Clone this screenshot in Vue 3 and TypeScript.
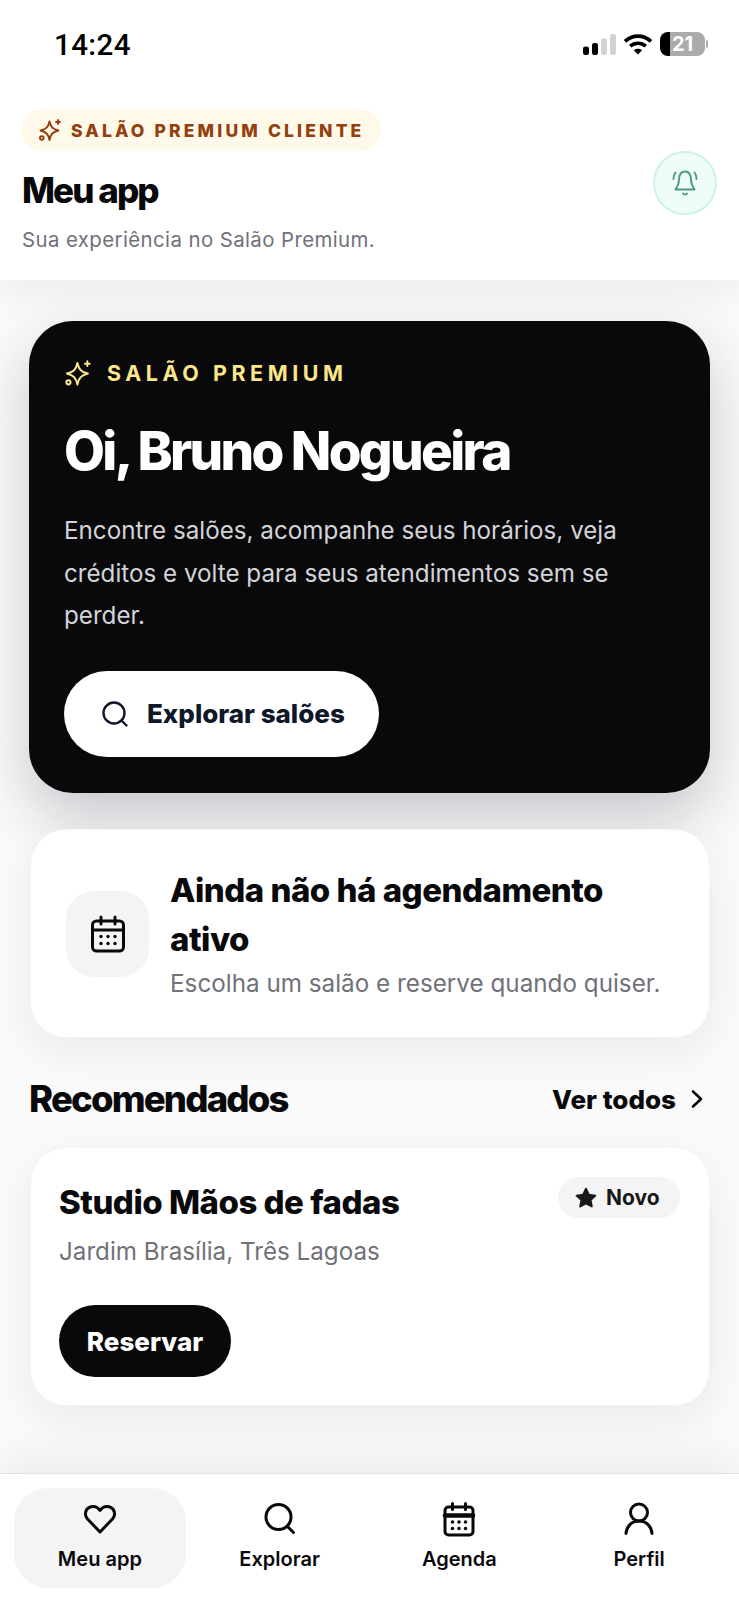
<script setup lang="ts">
const navItems = [
  { key: 'home', label: 'Meu app', active: true },
  { key: 'search', label: 'Explorar', active: false },
  { key: 'calendar', label: 'Agenda', active: false },
  { key: 'user', label: 'Perfil', active: false },
]
</script>

<template>
  <div class="app">
    <div class="status">
      <span class="time">14:24</span>
      <div class="status-icons">
        <svg class="signal" width="33" height="21" viewBox="0 0 33 21">
          <rect x="0" y="12.5" width="6" height="8.5" rx="2.2" fill="#000" />
          <rect x="9" y="9" width="6" height="12" rx="2.2" fill="#000" />
          <rect x="18" y="4.5" width="6" height="16.5" rx="2.2" fill="#d2d2d4" />
          <rect x="27" y="0" width="6" height="21" rx="2.2" fill="#d2d2d4" />
        </svg>
        <svg class="wifi" width="30" height="22" viewBox="0 0 30 22" fill="none" stroke="#000" stroke-width="3.6">
          <path d="M2 8.4C9.4 1.4 20.6 1.4 28 8.4" />
          <path d="M7.2 13.2C11.6 9.2 18.4 9.2 22.8 13.2" />
          <path d="M15 21.5 10.9 17.2C13.2 15.2 16.8 15.2 19.1 17.2Z" fill="#000" stroke="none" />
        </svg>
        <div class="battery"><span>21</span></div>
        <i class="battery-tip"></i>
      </div>
    </div>

    <header class="top">
      <div class="top-text">
        <div class="pill">
          <svg width="24" height="24" viewBox="0 0 24 24" fill="none" stroke="currentColor" stroke-width="1.9" stroke-linecap="round" stroke-linejoin="round">
            <path d="M11.5 3.5C12.8 9.2 14.8 11 20.5 12.5 14.8 14 12.8 15.8 11.5 22 10.2 15.800 8.200 14 2.500 12.500 8.200 11 10.200 9.200 11.500 3.500Z" />
            <path d="M20 2v4M18 4h4" />
            <circle cx="3.800" cy="20" r="1.800" />
          </svg>
          <span>SALÃO PREMIUM CLIENTE</span>
        </div>
        <h1>Meu app</h1>
        <p>Sua experiência no Salão Premium.</p>
      </div>
      <div class="bell">
        <svg width="30" height="30" viewBox="0 0 30 30" fill="none" stroke="currentColor" stroke-width="2" stroke-linecap="round" stroke-linejoin="round">
          <path d="M9 12C9 6 11.500 3.500 15 3.500S21 6 21 12C21 16.500 23 19 24.500 21.500H5.500C7 19 9 16.500 9 12Z" />
          <path d="M13 25.500C14 26.800 16 26.800 17 25.500" />
          <path d="M3.500 11C3.500 8.500 4 6.500 5.500 4.500M26.500 11C26.500 8.500 26 6.500 24.500 4.500" />
        </svg>
      </div>
    </header>

    <main class="content">
      <section class="hero">
        <div class="eyebrow">
          <svg width="28" height="28" viewBox="0 0 24 24" fill="none" stroke="currentColor" stroke-width="1.700" stroke-linecap="round" stroke-linejoin="round">
            <path d="M11.500 3.500C12.800 9.200 14.800 11 20.500 12.500 14.800 14 12.800 15.800 11.500 22 10.200 15.800 8.200 14 2.500 12.500 8.200 11 10.200 9.200 11.500 3.500Z" />
            <path d="M20 2v4M18 4h4" />
            <circle cx="3.800" cy="20" r="1.800" />
          </svg>
          <span>SALÃO PREMIUM</span>
        </div>
        <h2>Oi, Bruno Nogueira</h2>
        <p>Encontre salões, acompanhe seus horários, veja créditos e volte para seus atendimentos sem se perder.</p>
        <button class="explore">
          <svg width="28" height="28" viewBox="0 0 28 28" fill="none" stroke="currentColor" stroke-width="2.400" stroke-linecap="round">
            <circle cx="13" cy="13" r="10.500" />
            <path d="M21 21l4.500 4.500" />
          </svg>
          <span>Explorar salões</span>
        </button>
      </section>

      <section class="card empty">
        <div class="empty-icon">
          <svg width="36" height="38" viewBox="0 0 36 38" fill="none" stroke="#09090b" stroke-width="3" stroke-linecap="round" stroke-linejoin="round">
            <rect x="2.500" y="6" width="31" height="30" rx="4" />
            <path d="M2.500 15h31M11 2v7M25 2v7" />
            <g fill="#09090b" stroke="none">
              <circle cx="11" cy="21.500" r="1.700" /><circle cx="18" cy="21.500" r="1.700" /><circle cx="25" cy="21.500" r="1.700" />
              <circle cx="11" cy="28.500" r="1.700" /><circle cx="18" cy="28.500" r="1.700" /><circle cx="25" cy="28.500" r="1.700" />
            </g>
          </svg>
        </div>
        <div class="empty-text">
          <h3>Ainda não há agendamento ativo</h3>
          <p>Escolha um salão e reserve quando quiser.</p>
        </div>
      </section>

      <div class="section-head">
        <h2>Recomendados</h2>
        <div class="see-all">
          <span>Ver todos</span>
          <svg width="14" height="20" viewBox="0 0 14 20" fill="none" stroke="#09090b" stroke-width="2.600" stroke-linecap="round" stroke-linejoin="round">
            <path d="M3 2.500l8 7.500-8 7.500" />
          </svg>
        </div>
      </div>

      <section class="card salon">
        <div class="salon-head">
          <h3>Studio Mãos de fadas</h3>
          <div class="tag">
            <svg width="24" height="24" viewBox="0 0 22 22" fill="#18181b" stroke="#18181b" stroke-width="1.800" stroke-linejoin="round">
              <path d="M11 2.500l2.600 5.500 6 .8-4.400 4.100 1.100 5.900-5.300-2.900-5.300 2.900 1.100-5.900-4.400-4.100 6-.8z" />
            </svg>
            <span>Novo</span>
          </div>
        </div>
        <p>Jardim Brasília, Três Lagoas</p>
        <button class="reserve">Reservar</button>
      </section>
    </main>

    <nav class="tabs">
      <div v-for="item in navItems" :key="item.key" class="tab" :class="{ 'tab--active': item.active }">
        <svg v-if="item.key === 'home'" width="36" height="36" viewBox="0 0 36 36" fill="none" stroke="#09090b" stroke-width="3" stroke-linejoin="round">
          <path d="M18 31L5.500 18C2 14 3 7.500 9 5.800 12.800 4.800 16 6.500 18 9.500 20 6.500 23.200 4.800 27 5.800 33 7.500 34 14 30.500 18Z" />
        </svg>
        <svg v-else-if="item.key === 'search'" width="36" height="36" viewBox="0 0 36 36" fill="none" stroke="#09090b" stroke-width="3" stroke-linecap="round">
          <circle cx="16.500" cy="16" r="12.500" />
          <path d="M25.500 25.500l6 6" />
        </svg>
        <svg v-else-if="item.key === 'calendar'" width="36" height="36" viewBox="0 0 36 36" fill="none" stroke="#09090b" stroke-width="3" stroke-linecap="round" stroke-linejoin="round">
          <rect x="4" y="6" width="28" height="28" rx="3.500" />
          <path d="M4 14.500h28" stroke-width="4.500" />
          <path d="M11.500 2.500v6M24.500 2.500v6" />
          <g fill="#09090b" stroke="none">
            <circle cx="11.500" cy="21" r="1.800" /><circle cx="18" cy="21" r="1.800" /><circle cx="24.500" cy="21" r="1.800" />
            <circle cx="11.500" cy="27.500" r="1.800" /><circle cx="18" cy="27.500" r="1.800" /><circle cx="24.500" cy="27.500" r="1.800" />
          </g>
        </svg>
        <svg v-else width="36" height="36" viewBox="0 0 36 36" fill="none" stroke="#09090b" stroke-width="3" stroke-linecap="round">
          <circle cx="18" cy="11.500" r="8.500" />
          <path d="M5 32.500C5.500 25.500 10.500 20 18 20S30.500 25.500 31 32.500" />
        </svg>
        <span>{{ item.label }}</span>
      </div>
    </nav>
  </div>
</template>

<style scoped>
.app {
  width: 739px;
  height: 1600px;
  display: flex;
  flex-direction: column;
  overflow: hidden;
  background: #fafafa;
  color: #09090b;
  font-family: Inter, "Noto Sans", sans-serif;
}

.status {
  height: 90px;
  flex: none;
  box-sizing: border-box;
  padding: 32px 31px 0 54px;
  display: flex;
  justify-content: space-between;
  align-items: flex-start;
  background: #fff;
  position: relative;
  z-index: 3;
}
.time {
  font-size: 29.5px;
  line-height: 27px;
  font-weight: 500;
  color: #000;
  font-family: Roboto, Inter, sans-serif;
  letter-spacing: 0.4px;
}
.status-icons {
  display: flex;
  align-items: center;
  height: 24px;
}
.wifi {
  margin-left: 7px;
}
.battery {
  width: 45px;
  height: 24px;
  margin-left: 7px;
  border-radius: 8px;
  background: linear-gradient(90deg, #000 0 10px, #ababab 10px);
  display: flex;
  align-items: center;
  justify-content: center;
  color: #fff;
  font-size: 20px;
  font-weight: 700;
}
.battery-tip {
  width: 2px;
  height: 8px;
  margin-left: 1px;
  border-radius: 0 2px 2px 0;
  background: #ababab;
}

.top {
  flex: none;
  height: 190px;
  box-sizing: border-box;
  padding: 19px 22px 0 22px;
  display: flex;
  justify-content: space-between;
  background: #fff;
  position: relative;
  z-index: 2;
  box-shadow: 0 10px 40px rgba(15, 23, 42, 0.07);
}
.pill {
  width: 360px;
  height: 42px;
  margin-left: -1px;
  box-sizing: border-box;
  padding-left: 17px;
  display: flex;
  align-items: center;
  gap: 9px;
  border-radius: 21px;
  background: #fff9e9;
  color: #92400e;
  font-size: 17.5px;
  font-weight: 800;
  letter-spacing: 0.18em;
  white-space: nowrap;
}
.top h1 {
  margin: 19px 0 0;
  font-size: 35px;
  line-height: 40px;
  font-weight: 800;
  letter-spacing: -0.055em;
}
.top p {
  margin: 17px 0 0;
  font-size: 20.4px;
  line-height: 26px;
  color: #71717a;
  letter-spacing: 0.02em;
}
.bell {
  width: 64px;
  height: 64px;
  margin: 42px 0 0 0;
  box-sizing: border-box;
  display: flex;
  align-items: center;
  justify-content: center;
  border-radius: 50%;
  border: 2px solid #cdf3e3;
  background: #f0fcf7;
  color: #4d9b82;
}

.content {
  flex: 1;
  min-height: 0;
  padding: 41px 29px 0 30px;
  display: flex;
  flex-direction: column;
}

.hero {
  margin-left: -1px;
  height: 472px;
  box-sizing: border-box;
  padding: 38px 36px 0 35px;
  border-radius: 44px;
  background: #09090b;
  color: #fff;
  box-shadow: 0 24px 60px rgba(15, 23, 42, 0.22);
}
.eyebrow {
  display: flex;
  align-items: center;
  gap: 15px;
  color: #fde68a;
  font-size: 21.4px;
  line-height: 28px;
  font-weight: 700;
  letter-spacing: 0.215em;
}
.hero h2 {
  margin: 34px 0 0;
  font-size: 53px;
  line-height: 60px;
  font-weight: 800;
  letter-spacing: -0.05em;
}
.hero p {
  margin: 29px 0 0;
  font-size: 24.2px;
  line-height: 42.5px;
  color: #d4d4d8;
}
.explore {
  margin-top: 33px;
  width: 315px;
  height: 86px;
  padding: 0 0 0 37px;
  display: flex;
  align-items: center;
  gap: 18px;
  border: 0;
  border-radius: 43px;
  background: #fff;
  color: #0f172a;
  font-family: inherit;
  font-size: 26px;
  font-weight: 800;
}

.card {
  border-radius: 36px;
  background: #fff;
  border: 1px solid #f4f4f5;
  box-sizing: border-box;
  box-shadow: 0 14px 44px rgba(15, 23, 42, 0.07);
}
.empty {
  margin-top: 36px;
  height: 209px;
  padding: 0 30px 0 35px;
  display: flex;
  align-items: center;
  gap: 21px;
}
.empty-icon {
  width: 83px;
  height: 86px;
  flex: none;
  display: flex;
  align-items: center;
  justify-content: center;
  border-radius: 28px;
  background: #f4f4f5;
}
.empty-text h3 {
  margin: 0;
  max-width: 460px;
  font-size: 33px;
  line-height: 49px;
  font-weight: 800;
  letter-spacing: -0.015em;
}
.empty-text p {
  margin: 2px 0 0;
  font-size: 24.25px;
  line-height: 36px;
  color: #71717a;
  white-space: nowrap;
}

.section-head {
  margin-top: 38px;
  height: 46px;
  display: flex;
  align-items: center;
  justify-content: space-between;
}
.section-head h2 {
  margin: 0 0 0 -1px;
  font-size: 36.5px;
  font-weight: 800;
  letter-spacing: -0.05em;
}
.see-all {
  display: flex;
  align-items: center;
  gap: 14px;
  padding-right: 6px;
  font-size: 26px;
  font-weight: 800;
}

.salon {
  margin-top: 25px;
  height: 259px;
  padding: 29px 29px 0 28px;
}
.salon-head {
  display: flex;
  justify-content: space-between;
  align-items: flex-start;
}
.salon-head h3 {
  margin: 5px 0 0;
  font-size: 33px;
  line-height: 40px;
  font-weight: 800;
  letter-spacing: -0.015em;
}
.tag {
  width: 122px;
  height: 41px;
  box-sizing: border-box;
  padding-left: 16px;
  display: flex;
  align-items: center;
  gap: 8px;
  border-radius: 21px;
  background: #f4f4f5;
  color: #18181b;
  font-size: 21px;
  font-weight: 700;
}
.salon p {
  margin: 12px 0 0;
  font-size: 24.2px;
  line-height: 36px;
  color: #71717a;
}
.reserve {
  margin-top: 35px;
  width: 172px;
  height: 72px;
  border: 0;
  border-radius: 36px;
  background: #09090b;
  color: #fff;
  font-family: inherit;
  font-size: 26px;
  font-weight: 800;
}

.tabs {
  flex: none;
  height: 127px;
  box-sizing: border-box;
  padding: 14px 14px 0;
  display: grid;
  grid-template-columns: repeat(4, 1fr);
  gap: 8px;
  background: #fff;
  border-top: 1px solid #e4e4e7;
  position: relative;
  box-shadow: 0 -14px 40px rgba(15, 23, 42, 0.06);
}
.tab {
  height: 100px;
  box-sizing: border-box;
  padding-top: 13px;
  display: flex;
  flex-direction: column;
  align-items: center;
  border-radius: 34px;
  font-size: 20px;
  line-height: 26px;
  font-weight: 600;
}
.tab span {
  margin-top: 9px;
}
.tab--active {
  background: #f4f4f5;
}
</style>

<style>
html,
body {
  margin: 0;
  background: #fff;
}
</style>
